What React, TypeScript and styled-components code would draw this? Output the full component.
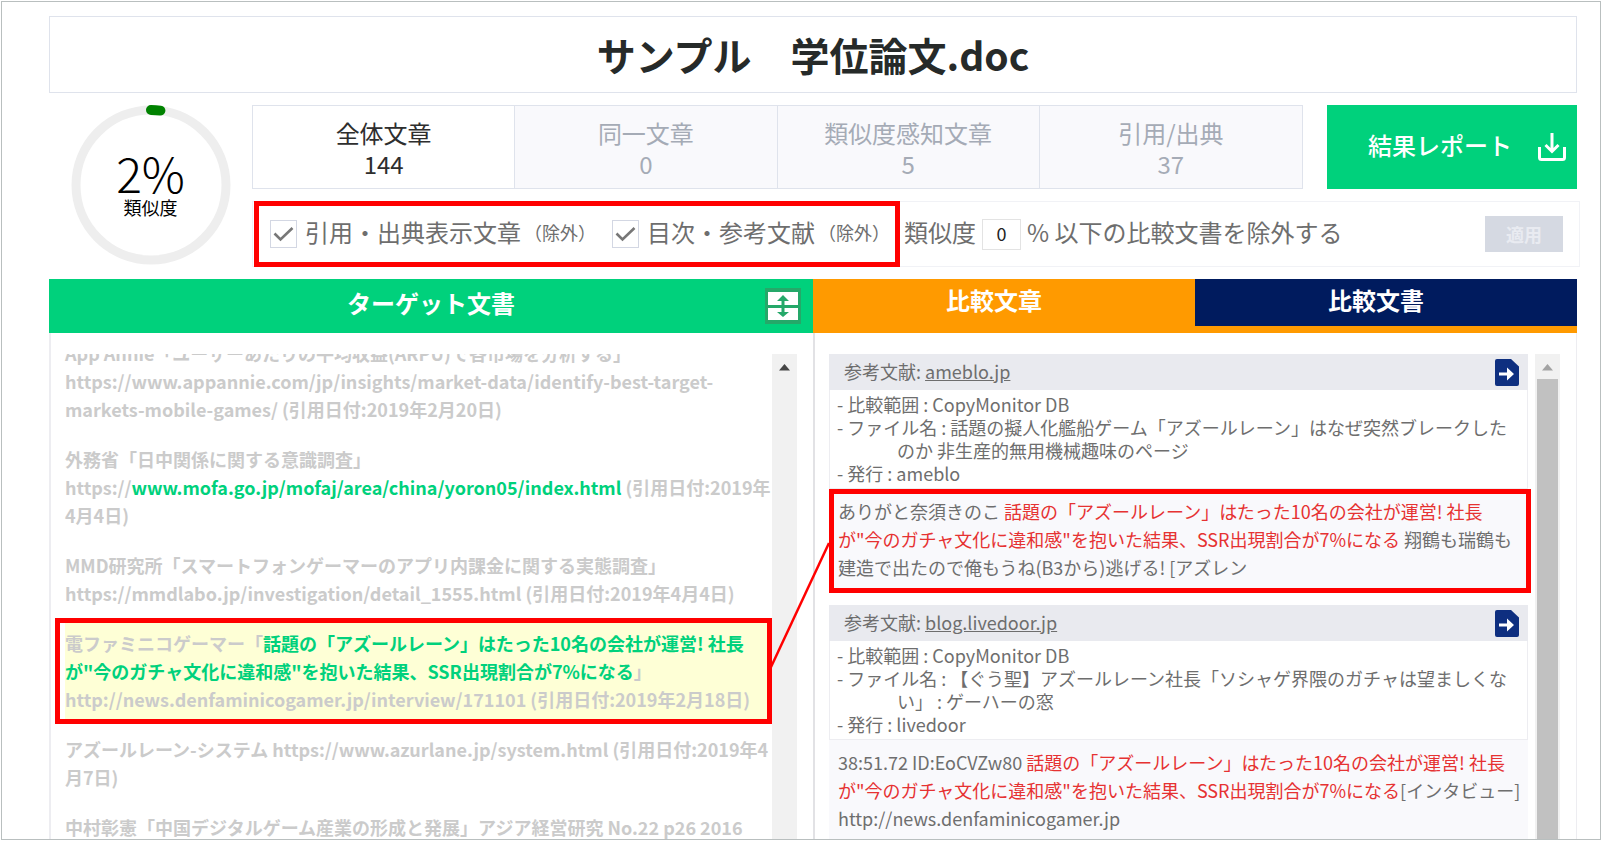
import React from "react";
import styled, { createGlobalStyle } from "styled-components";

const GlobalStyle = createGlobalStyle`
  *, *::before, *::after { box-sizing: border-box; }
  body {
    margin: 0;
    background: #fff;
    color: #6e6e6e;
    font-family: "Noto Sans CJK JP", "Noto Sans", sans-serif;
  }
  h1, h2, p, dl, dd { margin: 0; }
  button, input { font: inherit; }
`;

const colors = {
  green: "#00d17c",
  orange: "#ff9a00",
  navy: "#001b5e",
  line: "#dfe3ec",
  faint: "#ededf1",
  mark: "#ff0000",
};

const Frame = styled.div`
  display: flex;
  flex-direction: column;
  height: calc(100vh - 2px);
  margin: 1px;
  padding: 14px 23px 0 47px;
  border: 1px solid #b9bfbf;
  overflow: hidden;
`;

const TitleBar = styled.header`
  display: flex;
  align-items: center;
  justify-content: center;
  height: 77px;
  flex: none;
  border: 1px solid ${colors.line};
`;

const Title = styled.h1`
  padding-bottom: 2px;
  color: #262a29;
  font-size: 39px;
  line-height: 56px;
  font-weight: 700;
  white-space: pre;
`;

const Summary = styled.section`
  display: flex;
  flex: none;
  padding: 12px 0;
`;

const GaugeCell = styled.div`
  display: flex;
  justify-content: center;
  width: 203px;
  flex: none;
`;

const Gauge = styled.div`
  display: grid;
  place-items: center;
  width: 160px;
  height: 160px;
  color: #000;
  > * { grid-area: 1 / 1; }
`;

const GaugeText = styled.div`
  padding-bottom: 4px;
  text-align: center;
`;

const GaugeValue = styled.div`
  font-size: 48px;
  line-height: 48px;
  font-weight: 300;
`;

const GaugeLabel = styled.div`
  font-size: 18px;
  line-height: 22px;
`;

const SummaryMain = styled.div`
  display: flex;
  flex-direction: column;
  gap: 12px;
  flex: 1;
  min-width: 0;
`;

const StatRow = styled.div`
  display: flex;
  gap: 24px;
  height: 84px;
`;

const StatTabs = styled.div`
  display: grid;
  grid-template-columns: repeat(4, 1fr);
  flex: 1;
  border: 1px solid ${colors.line};
`;

const StatTab = styled.button<{ $active?: boolean }>`
  padding: 2px 0 0;
  border: 0;
  border-right: 1px solid ${colors.line};
  background: ${(p) => (p.$active ? "#fff" : "#f9f9fc")};
  color: ${(p) => (p.$active ? "#2e2e2e" : "#a5abb6")};
  font-size: 24px;
  line-height: 31px;
  &:last-child { border-right: 0; }
`;

const StatLine = styled.span`
  display: block;
`;

const ReportButton = styled.button`
  display: flex;
  align-items: center;
  justify-content: space-between;
  width: 250px;
  padding: 0 11px 0 41px;
  border: 0;
  background: ${colors.green};
  color: #fff;
  font-size: 24px;
  line-height: 32px;
  font-weight: 500;
`;

const RaisedText = styled.span`
  padding-bottom: 4px;
`;

const FilterRow = styled.form`
  display: flex;
  align-items: center;
  height: 66px;
  margin-right: -3px;
  padding-right: 16px;
  border: 1px solid #f1f2f6;
  font-size: 24px;
  line-height: 32px;
  white-space: nowrap;
`;

const MarkedGroup = styled.div`
  display: flex;
  align-items: center;
  gap: 16px;
  height: 66px;
  margin-left: 1px;
  padding: 0 5px 0 11px;
  border: 5px solid ${colors.mark};
`;

const CheckLabel = styled.label`
  display: flex;
  align-items: center;
`;

const CheckSlot = styled.span`
  display: grid;
  place-items: center;
  width: 27px;
  height: 28px;
  margin-right: 8px;
  > * { grid-area: 1 / 1; }
  svg { pointer-events: none; }
`;

const CheckInput = styled.input`
  appearance: none;
  width: 100%;
  height: 100%;
  margin: 0;
  border: 1px solid #d3d7e3;
  background: #fff;
`;

const SmallNote = styled(RaisedText)`
  margin-left: 3px;
  font-size: 18px;
`;

const ThresholdLabel = styled.label`
  display: flex;
  align-items: center;
  gap: 6px;
  margin-left: 4px;
`;

const ThresholdInput = styled.input`
  width: 39px;
  height: 31px;
  padding: 0 0 3px;
  border: 1px solid #e3e3e3;
  color: #222;
  font-size: 18px;
  text-align: center;
`;

const ApplyButton = styled.button`
  width: 78px;
  height: 36px;
  margin-left: auto;
  padding: 0;
  border: 0;
  background: #d5d9e2;
  color: #e9ebf1;
  font-size: 18px;
  line-height: 24px;
  font-weight: 700;
`;

const Panels = styled.main`
  position: relative;
  display: grid;
  grid-template-columns: 1fr 1fr;
  grid-template-rows: minmax(0, 1fr);
  flex: 1;
  min-height: 0;
`;

const Panel = styled.section`
  display: flex;
  flex-direction: column;
  min-width: 0;
  min-height: 0;
`;

const TargetHead = styled.div`
  display: grid;
  grid-template-columns: 48px 1fr 48px;
  align-items: center;
  height: 54px;
  flex: none;
  background: ${colors.green};
`;

const PanelTitle = styled.h2`
  grid-column: 2;
  padding-bottom: 6px;
  color: #fff;
  font-size: 24px;
  line-height: 32px;
  text-align: center;
`;

const SplitButton = styled.button`
  display: block;
  width: 36px;
  height: 36px;
  padding: 0;
  border: 0;
  background: none;
`;

const CompareTabs = styled.div`
  display: grid;
  grid-template-columns: 1fr 1fr;
  height: 54px;
  flex: none;
  padding-bottom: 7px;
  background: ${colors.orange};
`;

const CompareTab = styled.button<{ $dark?: boolean }>`
  padding: 0 20px 6px 0;
  border: 0;
  background: ${(p) => (p.$dark ? colors.navy : colors.orange)};
  color: #fff;
  font-size: 24px;
  line-height: 32px;
  font-weight: 700;
`;

const PanelBody = styled.div<{ $side: "left" | "right" }>`
  display: flex;
  flex: 1;
  min-height: 0;
  gap: ${(p) => (p.$side === "left" ? 0 : 4)}px;
  padding: 21px 16px 0 0;
  border-left: 2px solid ${(p) => (p.$side === "left" ? colors.faint : "#e2e2e5")};
  border-right: ${(p) => (p.$side === "left" ? "0" : `1px solid ${colors.faint}`)};
`;

const ScrollArea = styled.div`
  flex: 1;
  min-width: 0;
  padding-left: 14px;
  overflow: hidden;
`;

const ResultArea = styled(ScrollArea)`
  padding-right: 3px;
`;

const ScrollTrack = styled.div`
  display: flex;
  flex-direction: column;
  align-items: center;
  width: 25px;
  flex: none;
  background: #f1f1f1;
`;

const ScrollThumb = styled.div`
  flex: 1;
  width: 21px;
  background: #c1c1c1;
`;

const References = styled.div`
  display: grid;
  gap: 10px;
  margin-top: -21px;
  color: #cbcbcb;
  font-size: 18px;
  line-height: 28px;
  font-weight: 700;
`;

const Reference = styled.p<{ $highlight?: boolean }>`
  position: relative;
  padding: 6px 0;
  background: ${(p) => (p.$highlight ? "#feffd6" : "none")};
`;

const Match = styled.span`
  color: ${colors.green};
`;

const RefMark = styled.span`
  position: absolute;
  inset: -5px 0 -5px -10px;
  border: 5px solid ${colors.mark};
`;

const Card = styled.article`
  margin-bottom: 12px;
  font-size: 18px;
`;

const CardHead = styled.div`
  display: flex;
  align-items: center;
  justify-content: space-between;
  height: 36px;
  padding: 0 9px 0 15px;
  background: #e9eaef;
  line-height: 28px;
`;

const SourceLink = styled.a`
  color: inherit;
  text-decoration: underline;
`;

const CardSource = styled.div`
  padding-bottom: 3px;
`;

const OpenButton = styled.button`
  display: block;
  width: 24px;
  height: 27px;
  padding: 0;
  border: 0;
  background: none;
`;

const Details = styled.dl`
  padding: 3px 9px 3px 7px;
  border: 1px solid ${colors.faint};
  border-top: 0;
  line-height: 23px;
`;

const Detail = styled.div`
  padding-left: 60px;
  text-indent: -60px;
  dt, dd { display: inline; }
`;

const Quote = styled.p`
  padding: 8px 6px 12px 9px;
  background: #f9f9fc;
  line-height: 28px;
`;

const Hit = styled.span`
  color: #e63232;
`;

const QuoteWrap = styled.div`
  position: relative;
`;

const QuoteMark = styled.span`
  position: absolute;
  inset: 0 -3px 0 0;
  border: 5px solid ${colors.mark};
`;

const Connector = styled.svg`
  position: absolute;
  top: 262px;
  left: calc(50% - 43px);
  pointer-events: none;
`;

const GaugeRing = () => (
  <svg width="160" height="160" viewBox="0 0 160 160" fill="none" aria-hidden="true">
    <circle cx="80" cy="80" r="75" stroke="#eee" strokeWidth="9" />
    <path d="M80 5a75 75 0 0 1 9.4 .6" stroke="#008200" strokeWidth="10" strokeLinecap="round" />
  </svg>
);

const DownloadIcon = () => (
  <svg width="28" height="28" viewBox="0 0 28 28" fill="none" stroke="#fff" strokeWidth="3" aria-hidden="true">
    <path d="M14 0v18M7.500 12l6.500 6.500L20.500 12" />
    <path d="M1.500 14v10.500a2 2 0 0 0 2 2h21a2 2 0 0 0 2-2V14" />
  </svg>
);

const CheckIcon = () => (
  <svg width="21" height="16" viewBox="0 0 21 16" fill="none" stroke="#777" strokeWidth="2.600" aria-hidden="true">
    <path d="M1.500 7.500l6 6L19.500 2" />
  </svg>
);

const SplitIcon = () => (
  <svg width="36" height="36" viewBox="0 0 36 36" aria-hidden="true">
    <path d="M0 0h36v36H0z" fill="#25a869" />
    <path d="M3 4h30v13H3zM3 20h30v12H3z" fill="#fff" />
    <path d="M18 7l6 6h-4.500v11H24l-6 5-6-5h4.500V13H12z" fill="#25a869" />
  </svg>
);

const OpenIcon = () => (
  <svg width="24" height="27" viewBox="0 0 24 27" aria-hidden="true">
    <path d="M2 0h14l8 7.500V25a2 2 0 0 1-2 2H2a2 2 0 0 1-2-2V2a2 2 0 0 1 2-2z" fill="#0e2f80" />
    <path d="M4 13.500h8V8.500l7 6.500-7 6.500v-5H4z" fill="#fff" />
  </svg>
);

const ArrowUp = ({ color }: { color: string }) => (
  <svg width="25" height="25" viewBox="0 0 25 25" aria-hidden="true">
    <path d="M12.500 10l5.500 6.500H7z" fill={color} />
  </svg>
);

const stats = [
  { label: "全体文章", count: 144, active: true },
  { label: "同一文章", count: 0 },
  { label: "類似度感知文章", count: 5 },
  { label: "引用/出典", count: 37 },
];

type Source = {
  site: string;
  file: string;
  publisher: string;
  quote: React.ReactNode;
  marked?: boolean;
};

const hitText = '話題の「アズールレーン」はたった10名の会社が運営! 社長が"今のガチャ文化に違和感"を抱いた結果、SSR出現割合が7%になる';

const sources: Source[] = [
  {
    site: "ameblo.jp",
    file: "話題の擬人化艦船ゲーム「アズールレーン」はなぜ突然ブレークしたのか 非生産的無用機械趣味のページ",
    publisher: "ameblo",
    marked: true,
    quote: (
      <>
        ありがと奈須きのこ <Hit>{hitText}</Hit> 翔鶴も瑞鶴も建造で出たので俺もうね(B3から)逃げる! [アズレン
      </>
    ),
  },
  {
    site: "blog.livedoor.jp",
    file: "【ぐう聖】アズールレーン社長「ソシャゲ界隈のガチャは望ましくない」 : ゲーハーの窓",
    publisher: "livedoor",
    quote: (
      <>
        38:51.72 ID:EoCVZw80 <Hit>{hitText}</Hit>[インタビュー] http://news.denfaminicogamer.jp
      </>
    ),
  },
];

const CheckOption = ({ text }: { text: string }) => (
  <CheckLabel>
    <CheckSlot>
      <CheckInput type="checkbox" defaultChecked />
      <CheckIcon />
    </CheckSlot>
    <RaisedText>{text}</RaisedText>
    <SmallNote>（除外）</SmallNote>
  </CheckLabel>
);

const SourceCard = ({ site, file, publisher, quote, marked }: Source) => (
  <Card>
    <CardHead>
      <CardSource>
        参考文献: <SourceLink href="#">{site}</SourceLink>
      </CardSource>
      <OpenButton type="button" aria-label={`${site}を開く`}>
        <OpenIcon />
      </OpenButton>
    </CardHead>
    <Details>
      <Detail>
        <dt>- 比較範囲 : </dt>
        <dd>CopyMonitor DB</dd>
      </Detail>
      <Detail>
        <dt>- ファイル名 : </dt>
        <dd>{file}</dd>
      </Detail>
      <Detail>
        <dt>- 発行 : </dt>
        <dd>{publisher}</dd>
      </Detail>
    </Details>
    <QuoteWrap>
      <Quote>{quote}</Quote>
      {marked && <QuoteMark />}
    </QuoteWrap>
  </Card>
);

export default function App() {
  return (
    <>
      <GlobalStyle />
      <Frame>
        <TitleBar>
          <Title>サンプル　学位論文.doc</Title>
        </TitleBar>

        <Summary>
          <GaugeCell>
            <Gauge>
              <GaugeRing />
              <GaugeText>
                <GaugeValue>2%</GaugeValue>
                <GaugeLabel>類似度</GaugeLabel>
              </GaugeText>
            </Gauge>
          </GaugeCell>
          <SummaryMain>
            <StatRow>
              <StatTabs>
                {stats.map((s) => (
                  <StatTab key={s.label} type="button" $active={s.active}>
                    <StatLine>{s.label}</StatLine>
                    <StatLine>{s.count}</StatLine>
                  </StatTab>
                ))}
              </StatTabs>
              <ReportButton type="button">
                <RaisedText>結果レポート</RaisedText>
                <DownloadIcon />
              </ReportButton>
            </StatRow>
            <FilterRow onSubmit={(e) => e.preventDefault()}>
              <MarkedGroup>
                <CheckOption text="引用・出典表示文章" />
                <CheckOption text="目次・参考文献" />
              </MarkedGroup>
              <ThresholdLabel>
                <RaisedText>類似度</RaisedText>
                <ThresholdInput type="text" defaultValue="0" />
                <RaisedText>% 以下の比較文書を除外する</RaisedText>
              </ThresholdLabel>
              <ApplyButton type="submit">適用</ApplyButton>
            </FilterRow>
          </SummaryMain>
        </Summary>

        <Panels>
          <Panel>
            <TargetHead>
              <PanelTitle>ターゲット文書</PanelTitle>
              <SplitButton type="button" aria-label="上下に広げる">
                <SplitIcon />
              </SplitButton>
            </TargetHead>
            <PanelBody $side="left">
              <ScrollArea>
                <References>
                  <Reference>
                    App Annie「ユーザーあたりの平均収益(ARPU)で各市場を分析する」
                    <br />
                    https://www.appannie.com/jp/insights/market-data/identify-best-target-markets-mobile-games/ (引用日付:2019年2月20日)
                  </Reference>
                  <Reference>
                    外務省「日中関係に関する意識調査」
                    <br />
                    https://<Match>www.mofa.go.jp/mofaj/area/china/yoron05/index.html</Match> (引用日付:2019年4月4日)
                  </Reference>
                  <Reference>
                    MMD研究所「スマートフォンゲーマーのアプリ内課金に関する実態調査」
                    <br />
                    https://mmdlabo.jp/investigation/detail_1555.html (引用日付:2019年4月4日)
                  </Reference>
                  <Reference $highlight>
                    電ファミニコゲーマー「<Match>{hitText}</Match>」
                    <br />
                    http://news.denfaminicogamer.jp/interview/171101 (引用日付:2019年2月18日)
                    <RefMark />
                  </Reference>
                  <Reference>アズールレーン-システム https://www.azurlane.jp/system.html (引用日付:2019年4月7日)</Reference>
                  <Reference>中村彰憲「中国デジタルゲーム産業の形成と発展」アジア経営研究 No.22 p26 2016</Reference>
                </References>
              </ScrollArea>
              <ScrollTrack>
                <ArrowUp color="#454545" />
              </ScrollTrack>
            </PanelBody>
          </Panel>

          <Panel>
            <CompareTabs>
              <CompareTab type="button">比較文章</CompareTab>
              <CompareTab type="button" $dark>
                比較文書
              </CompareTab>
            </CompareTabs>
            <PanelBody $side="right">
              <ResultArea>
                {sources.map((s) => (
                  <SourceCard key={s.site} {...s} />
                ))}
              </ResultArea>
              <ScrollTrack>
                <ArrowUp color="#a3a3a3" />
                <ScrollThumb />
              </ScrollTrack>
            </PanelBody>
          </Panel>

          <Connector width="60" height="128" viewBox="0 0 60 128" aria-hidden="true">
            <path d="M1 126L59 2" stroke="#ff0000" strokeWidth="2.500" />
          </Connector>
        </Panels>
      </Frame>
    </>
  );
}
